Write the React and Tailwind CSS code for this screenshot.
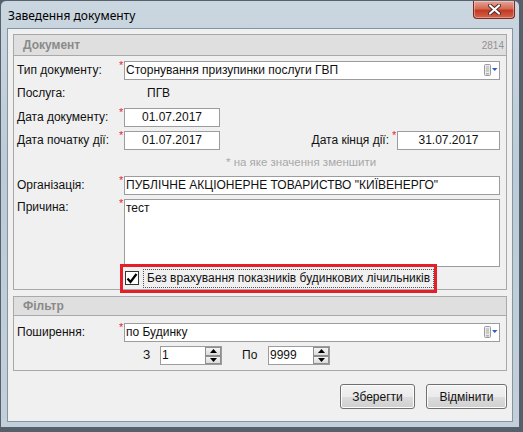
import React from "react";

function Req() {
  return (
    <span className="absolute -left-[6px] -top-[2px] text-[11px] leading-none text-[#e0262e]">*</span>
  );
}

function Box({ className = "", required, children }) {
  return (
    <div className={`relative h-[19px] border border-[#9c9c9c] bg-white ${className}`}>
      {required && <Req />}
      {children}
    </div>
  );
}

function ComboIcon() {
  return (
    <svg width="14" height="13" viewBox="0 0 14 13" className="mr-[1px] shrink-0">
      <rect x="0.5" y="0.5" width="6" height="11" rx="1" fill="#ececec" stroke="#9a9a9a" />
      <line x1="2" y1="3" x2="5" y2="3" stroke="#a8a8a8" />
      <line x1="2" y1="5" x2="5" y2="5" stroke="#a8a8a8" />
      <line x1="2" y1="7" x2="5" y2="7" stroke="#a8a8a8" />
      <rect x="2" y="9" width="3" height="1.5" fill="#b0b0b0" />
      <path d="M8 4h5.5l-2.75 3z" fill="#2a5fc4" />
    </svg>
  );
}

function SpinBtn({ up }) {
  return (
    <div className="flex flex-1 items-center justify-center border border-[#8e8e8e] bg-[linear-gradient(#f4f4f4,#dcdcdc)]">
      <svg width="7" height="4" viewBox="0 0 7 4">
        {up ? <path d="M0 4h7L3.5 0z" fill="#000" /> : <path d="M0 0h7L3.5 4z" fill="#000" />}
      </svg>
    </div>
  );
}

function Spin({ value }) {
  return (
    <div className="flex h-[19px] w-[62px] border border-[#9c9c9c] bg-white">
      <span className="flex-1 pl-[1px] leading-[17px]">{value}</span>
      <div className="flex w-[16px] flex-col">
        <SpinBtn up />
        <SpinBtn />
      </div>
    </div>
  );
}

function Label({ children }) {
  return <span className="w-[107px] shrink-0 leading-[19px]">{children}</span>;
}

function GroupHeader({ title, extra, tall }) {
  return (
    <div
      className={`flex items-center justify-between border-b border-[#a9a9a9] bg-[#dfdfdf] pl-[9px] pr-[2px] ${
        tall ? "h-[21px]" : "h-[19px]"
      }`}
    >
      <span className="text-[12px] font-bold text-[#8a8a8a]">{title}</span>
      {extra && <span className="text-[10px] text-[#939393]">{extra}</span>}
    </div>
  );
}

export default function App() {
  const btn =
    "h-[25px] rounded-[3px] border border-[#707070] bg-[linear-gradient(#f3f3f3,#ebebeb_50%,#dddddd_51%,#cfcfcf)] text-[12px] shadow-[inset_0_0_0_1px_#fcfcfc]";

  return (
    <div className="h-[432px] w-[523px] overflow-hidden bg-[#55606a] font-['Liberation_Sans',Arial,sans-serif] text-[12px] text-[#111]">
      <div className="flex h-[428px] w-[520px] flex-col rounded-t-[6px] border border-[#56616b] bg-[linear-gradient(#cad6e0,#bccbd7_40%,#c3d0db)] px-[6px] pb-[5px]">
        {/* title bar */}
        <div className="flex h-[27px] shrink-0 items-start justify-between">
          <span className="pl-[1px] pt-[7px] font-['Noto_Sans',sans-serif] text-[12px] leading-[15px] text-black">
            Заведення документу
          </span>
          <div className="-mr-[2px] flex h-[18px] w-[42px] items-center justify-center rounded-b-[4px] border border-[#7a2a20] border-t-0 bg-[linear-gradient(#e7a596,#d46a55_45%,#c23a22_55%,#d5644b)] shadow-[inset_0_0_0_1px_rgba(255,255,255,0.35)]">
            <svg width="13" height="11" viewBox="0 0 13 11">
              <path d="M2 1.5l9 8M11 1.5l-9 8" stroke="#4a2a26" strokeWidth="4" strokeLinecap="round" />
              <path d="M2 1.5l9 8M11 1.5l-9 8" stroke="#fff" strokeWidth="2.2" strokeLinecap="round" />
            </svg>
          </div>
        </div>

        {/* client area */}
        <div className="flex flex-1 flex-col border border-[#8394a3] bg-[#f0f0f0] px-[5px] pt-[5px]">
          {/* Документ */}
          <div className="border border-[#a9a9a9]">
            <GroupHeader title="Документ" extra="2814" tall />
            <div className="flex flex-col pb-[1px] pl-[3px] pr-[6px] pt-[5px]">
              <div className="flex">
                <Label>Тип документу:</Label>
                <Box required className="flex flex-1 items-center pl-[1px]">
                  <span className="flex-1 leading-[17px]">Сторнування призупинки послуги ГВП</span>
                  <ComboIcon />
                </Box>
              </div>

              <div className="mt-[4px] flex">
                <Label>Послуга:</Label>
                <span className="ml-[23px] leading-[19px]">ПГВ</span>
              </div>

              <div className="mt-[5px] flex">
                <Label>Дата документу:</Label>
                <Box required className="w-[96px] text-center leading-[17px]">
                  01.07.2017
                </Box>
              </div>

              <div className="mt-[4px] flex">
                <Label>Дата початку дії:</Label>
                <Box required className="w-[96px] text-center leading-[17px]">
                  01.07.2017
                </Box>
                <span className="ml-auto mr-[8px] leading-[19px]">Дата кінця дії:</span>
                <Box required className="w-[103px] text-center leading-[17px]">
                  31.07.2017
                </Box>
              </div>

              <div className="ml-[209px] mt-[4px] h-[16px] text-[11.5px] leading-[16px] text-[#a8a8a8]">
                * на яке значення зменшити
              </div>

              <div className="mt-[6px] flex">
                <Label>Організація:</Label>
                <Box required className="flex-1 pl-[1px] leading-[17px]">
                  ПУБЛІЧНЕ АКЦІОНЕРНЕ ТОВАРИСТВО "КИЇВЕНЕРГО"
                </Box>
              </div>

              <div className="mt-[4px] flex">
                <span className="w-[107px] shrink-0 leading-[17px]">Причина:</span>
                <div className="relative h-[68px] flex-1 border border-[#9c9c9c] bg-white pl-[1px] leading-[17px]">
                  <Req />
                  тест
                </div>
              </div>

              <div className="relative ml-[107px] mt-[1px] flex h-[20px] items-center">
                <div className="ml-[1px] flex h-[14px] w-[14px] items-center justify-center border border-[#333] bg-white">
                  <svg width="12" height="11" viewBox="0 0 12 11">
                    <path d="M1.5 5.5l3 3.5L10.5 1" stroke="#000" strokeWidth="2.2" fill="none" />
                  </svg>
                </div>
                <span className="ml-[4px] h-[19px] border border-dotted border-[#555] px-[3px] leading-[17px]">
                  Без врахування показників будинкових лічильників
                </span>
                <div className="pointer-events-none absolute -left-[4px] -top-[4px] h-[29px] w-[317px] border-[3px] border-[#e3202a]" />
              </div>
            </div>
          </div>

          {/* Фільтр */}
          <div className="mt-[6px] border border-[#a9a9a9]">
            <GroupHeader title="Фільтр" />
            <div className="flex flex-col pb-[5px] pl-[3px] pr-[6px] pt-[7px]">
              <div className="flex">
                <Label>Поширення:</Label>
                <Box required className="flex flex-1 items-center pl-[1px]">
                  <span className="flex-1 leading-[17px]">по Будинку</span>
                  <ComboIcon />
                </Box>
              </div>
              <div className="mt-[4px] flex items-center">
                <span className="ml-[126px] w-[17px] leading-[19px]">З</span>
                <Spin value="1" />
                <span className="ml-[20px] w-[26px] leading-[19px]">По</span>
                <Spin value="9999" />
              </div>
            </div>
          </div>

          <div className="mt-[13px] flex justify-end gap-[11px]">
            <button type="button" className={`${btn} w-[75px]`}>
              Зберегти
            </button>
            <button type="button" className={`${btn} w-[81px]`}>
              Відмінити
            </button>
          </div>
        </div>
      </div>
    </div>
  );
}
